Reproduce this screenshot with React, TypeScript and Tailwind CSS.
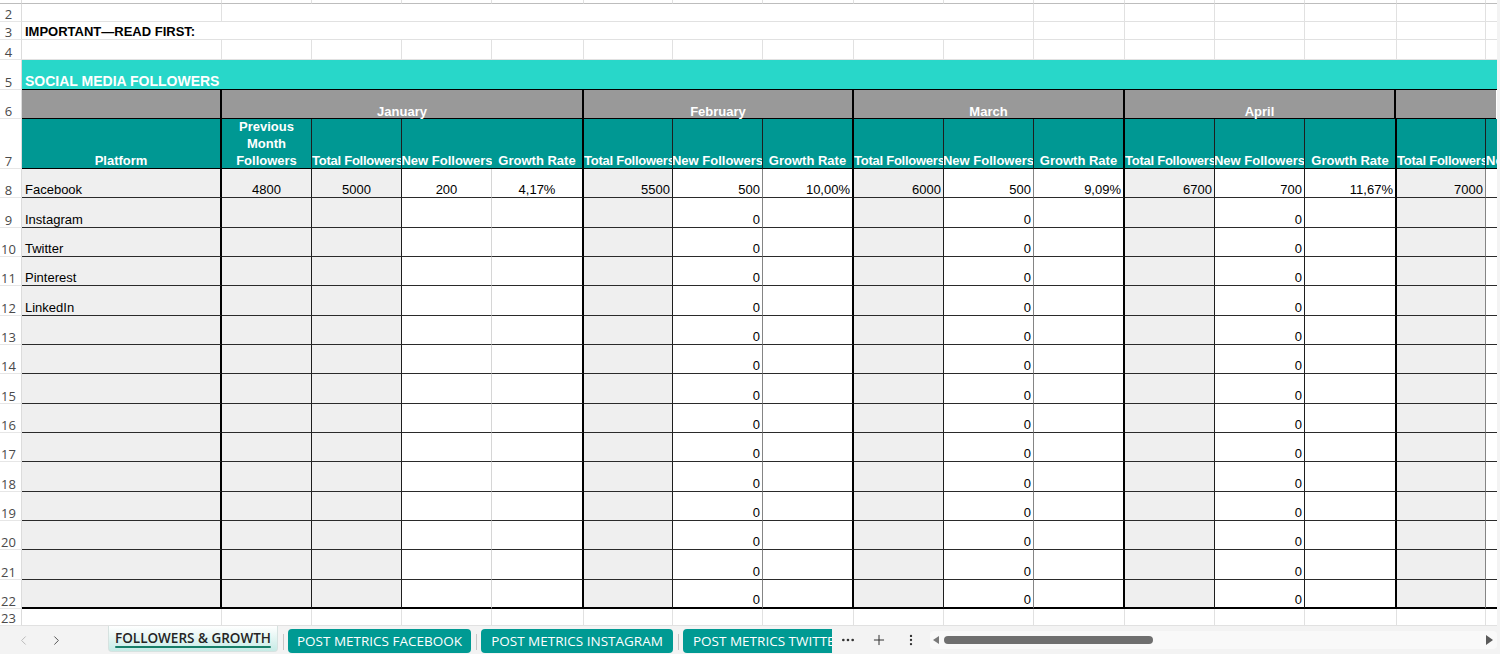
import React from 'react';
import { ChevronLeft, ChevronRight, Plus, MoreVertical, MoreHorizontal } from 'lucide-react';

type Col = { w: string; fill: boolean; br: string; hbr: string; hdr: string; hal: string };

const THICK = 'border-r-2 border-r-black';
const DARK = 'border-r border-r-[#1e1e1e]';
const MID = 'border-r border-r-[#858585]';
const LIGHT = 'border-r border-r-[#d6d6d6]';
const GRID = 'border-r border-r-[#e1e1e1]';
const TL = 'justify-start tracking-[-0.25px]';

const cols: Col[] = [
  { w: 'w-[90px]', fill: true, br: DARK, hbr: DARK, hdr: 'Previous Month Followers', hal: 'justify-center' },
  { w: 'w-[90px]', fill: true, br: DARK, hbr: DARK, hdr: 'Total Followers', hal: TL },
  { w: 'w-[90px]', fill: false, br: LIGHT, hbr: '', hdr: 'New Followers', hal: 'justify-center' },
  { w: 'w-[92px]', fill: false, br: THICK, hbr: THICK, hdr: 'Growth Rate', hal: 'justify-center' },
  { w: 'w-[89px]', fill: true, br: DARK, hbr: DARK, hdr: 'Total Followers', hal: TL },
  { w: 'w-[90px]', fill: false, br: MID, hbr: DARK, hdr: 'New Followers', hal: 'justify-center' },
  { w: 'w-[91px]', fill: false, br: THICK, hbr: THICK, hdr: 'Growth Rate', hal: 'justify-center' },
  { w: 'w-[90px]', fill: true, br: DARK, hbr: DARK, hdr: 'Total Followers', hal: TL },
  { w: 'w-[90px]', fill: false, br: MID, hbr: DARK, hdr: 'New Followers', hal: 'justify-center' },
  { w: 'w-[91px]', fill: false, br: THICK, hbr: THICK, hdr: 'Growth Rate', hal: 'justify-center' },
  { w: 'w-[90px]', fill: true, br: DARK, hbr: DARK, hdr: 'Total Followers', hal: TL },
  { w: 'w-[90px]', fill: false, br: DARK, hbr: DARK, hdr: 'New Followers', hal: 'justify-center' },
  { w: 'w-[92px]', fill: false, br: THICK, hbr: THICK, hdr: 'Growth Rate', hal: 'justify-center' },
  { w: 'w-[89px]', fill: true, br: MID, hbr: DARK, hdr: 'Total Followers', hal: TL },
  { w: 'w-[11px]', fill: false, br: '', hbr: '', hdr: 'New Followers', hal: 'justify-start' },
];

const allW = ['w-[200px]', ...cols.map((c) => c.w)];

function RowHead({ n, cls = '' }: { n?: string; cls?: string }) {
  return (
    <div
      className={`w-[22px] shrink-0 flex items-end justify-center pr-[4px] text-[13px] leading-[13px] text-[#4a4a4a] font-['Open_Sans',sans-serif] border-r border-r-[#dcdcdc] border-b border-b-[#e6e6e6] bg-white ${cls}`}
    >
      {n}
    </div>
  );
}

function GridRow({ n, h }: { n?: string; h: string }) {
  return (
    <div className={`flex shrink-0 ${h}`}>
      <RowHead n={n} />
      {allW.map((w, i) => (
        <div key={i} className={`${w} shrink-0 border-b border-b-[#e1e1e1] ${i < allW.length - 1 ? GRID : ''}`} />
      ))}
    </div>
  );
}

type V = { t: string; a: 'c' | 'r' };

function DataRow({ n, name, vals, last }: { n: string; name: string; vals: (V | null)[]; last?: boolean }) {
  const bb = last ? 'border-b-2 border-b-black' : 'border-b border-b-[#2a2a2a]';
  return (
    <div className="flex flex-1 min-h-0">
      <RowHead n={n} />
      <div className={`w-[200px] shrink-0 bg-[#efefef] ${THICK} ${bb} flex items-end pl-[3px] leading-[15px]`}>{name}</div>
      {cols.map((c, i) => {
        const v = vals[i];
        return (
          <div
            key={i}
            className={`${c.w} shrink-0 ${c.fill ? 'bg-[#efefef]' : 'bg-white'} ${c.br} ${bb} flex items-end leading-[15px] overflow-hidden ${
              v && v.a === 'c' ? 'justify-center' : 'justify-end pr-[2px]'
            }`}
          >
            {v ? v.t : ''}
          </div>
        );
      })}
    </div>
  );
}

const row8: V[] = [
  { t: '4800', a: 'c' },
  { t: '5000', a: 'c' },
  { t: '200', a: 'c' },
  { t: '4,17%', a: 'c' },
  { t: '5500', a: 'r' },
  { t: '500', a: 'r' },
  { t: '10,00%', a: 'r' },
  { t: '6000', a: 'r' },
  { t: '500', a: 'r' },
  { t: '9,09%', a: 'r' },
  { t: '6700', a: 'r' },
  { t: '700', a: 'r' },
  { t: '11,67%', a: 'r' },
  { t: '7000', a: 'r' },
];

const zeroRow: (V | null)[] = [null, null, null, null, null, { t: '0', a: 'r' }, null, null, { t: '0', a: 'r' }, null, null, { t: '0', a: 'r' }, null, null, null];

const names = ['Instagram', 'Twitter', 'Pinterest', 'LinkedIn', '', '', '', '', '', '', '', '', '', ''];

function Sep() {
  return <div className="w-px h-[16px] bg-[#c6c6c6] shrink-0" />;
}

export default function App() {
  return (
    <div className="w-[1500px] h-[654px] overflow-hidden bg-white flex flex-col font-['Liberation_Sans',Arial,sans-serif] text-[13px] text-black">
      <div className="flex flex-1 min-h-0">
        <div className="w-[1497px] shrink-0 flex flex-col">
          {/* row 1 remnant */}
          <div className="flex h-[4px] shrink-0">
            <div className="w-[22px] shrink-0 border-r border-r-[#dcdcdc] border-b border-b-[#bdbdbd]" />
            {allW.map((w, i) => (
              <div key={i} className={`${w} shrink-0 border-b border-b-[#bdbdbd] ${i < allW.length - 1 ? GRID : ''}`} />
            ))}
          </div>
          {/* row 2 */}
          <div className="flex h-[18px] shrink-0">
            <RowHead n="2" />
            <div className={`w-[200px] shrink-0 border-b border-b-[#e1e1e1] ${GRID}`} />
            <div className={`w-[812px] shrink-0 border-b border-b-[#e1e1e1] ${GRID}`} />
            {allW.slice(10).map((w, i, a) => (
              <div key={i} className={`${w} shrink-0 border-b border-b-[#e1e1e1] ${i < a.length - 1 ? GRID : ''}`} />
            ))}
          </div>
          {/* row 3 */}
          <div className="flex h-[18px] shrink-0">
            <RowHead n="3" />
            <div className={`w-[1012px] shrink-0 border-b border-b-[#e1e1e1] ${GRID} flex items-end pl-[3px] font-bold leading-[15px]`}>
              IMPORTANT—READ FIRST:
            </div>
            {allW.slice(10).map((w, i, a) => (
              <div key={i} className={`${w} shrink-0 border-b border-b-[#e1e1e1] ${i < a.length - 1 ? GRID : ''}`} />
            ))}
          </div>
          {/* row 4 */}
          <GridRow n="4" h="h-[20px]" />
          {/* row 5 */}
          <div className="flex h-[30px] shrink-0">
            <RowHead n="5" />
            <div className="flex-1 bg-[#28d7c9] border-b border-b-black flex items-end pl-[3px] text-white font-bold text-[14px] leading-[16px]">
              SOCIAL MEDIA FOLLOWERS
            </div>
          </div>
          {/* row 6 */}
          <div className="flex h-[29px] shrink-0">
            <RowHead n="6" />
            <div className={`w-[200px] shrink-0 bg-[#999999] ${THICK} border-b border-b-black`} />
            {[
              ['w-[362px]', 'January', THICK],
              ['w-[270px]', 'February', THICK],
              ['w-[271px]', 'March', THICK],
              ['w-[271px]', 'April', THICK],
              ['w-[100px]', '', ''],
            ].map(([w, t, b], i) => (
              <div
                key={i}
                className={`${w} shrink-0 bg-[#999999] ${b} border-b border-b-black flex items-end justify-center text-white font-bold leading-[13px]`}
              >
                {t}
              </div>
            ))}
          </div>
          {/* row 7 */}
          <div className="flex h-[50px] shrink-0">
            <RowHead n="7" />
            <div className={`w-[200px] shrink-0 bg-[#009893] ${THICK} border-b border-b-black flex items-end justify-center text-white font-bold leading-[17px]`}>
              <span className="translate-y-[1px]">Platform</span>
            </div>
            {cols.map((c, i) => (
              <div
                key={i}
                className={`${c.w} shrink-0 bg-[#009893] ${c.hbr} border-b border-b-black flex items-end ${c.hal} overflow-hidden text-white font-bold leading-[17px] text-center`}
              >
                <span className={i === 0 ? 'block translate-y-[1px]' : 'whitespace-nowrap shrink-0 translate-y-[1px]'}>{c.hdr}</span>
              </div>
            ))}
          </div>
          {/* data rows 8-22 */}
          <div className="flex flex-col h-[440px] shrink-0">
            <DataRow n="8" name="Facebook" vals={row8} />
            {names.map((nm, i) => (
              <DataRow key={i} n={String(9 + i)} name={nm} vals={zeroRow} last={i === names.length - 1} />
            ))}
          </div>
          {/* row 23 */}
          <GridRow n="23" h="h-[17px]" />
        </div>
        <div className="flex-1 bg-[#f3f3f3]" />
      </div>

      {/* tab bar */}
      <div className="h-[28px] shrink-0 bg-[#f3f3f3] flex items-start font-['Open_Sans',sans-serif] text-[13.5px]">
        <div className="w-[108px] shrink-0 h-full flex items-center">
          <ChevronLeft className="ml-[16px] text-[#b5b5b5]" size={15} strokeWidth={1.5} />
          <ChevronRight className="ml-[18px] text-[#4a4a4a]" size={15} strokeWidth={1.5} />
        </div>
        <div className="relative w-[170px] h-[26px] shrink-0 rounded-b-[4px] bg-gradient-to-b from-white to-[#c6ebe6] border-x border-b border-[#d6e2e0] flex items-center justify-center font-semibold text-[#242424]">
          <span className="leading-[18px] -mt-[2px]">FOLLOWERS &amp; GROWTH</span>
          <div className="absolute left-[6px] right-[6px] bottom-[3px] h-[2px] rounded-full bg-[#167e68]" />
        </div>
        <div className="ml-[5px] mt-[8px]"><Sep /></div>
        <div className="ml-[4px] mt-[3px] w-[183px] h-[24px] shrink-0 rounded-[4px] bg-[#009a93] text-white flex items-center justify-center whitespace-nowrap">
          POST METRICS FACEBOOK
        </div>
        <div className="ml-[5px] mt-[8px]"><Sep /></div>
        <div className="ml-[4px] mt-[3px] w-[192px] h-[24px] shrink-0 rounded-[4px] bg-[#009a93] text-white flex items-center justify-center whitespace-nowrap">
          POST METRICS INSTAGRAM
        </div>
        <div className="ml-[5px] mt-[8px]"><Sep /></div>
        <div className="ml-[4px] mt-[3px] w-[149px] h-[24px] shrink-0 rounded-l-[4px] bg-[#009a93] text-white flex items-center pl-[10px] whitespace-nowrap overflow-hidden">
          POST METRICS TWITTER
        </div>
        <div className="h-full flex items-center">
          <MoreHorizontal className="ml-[8px] text-[#333]" size={16} strokeWidth={2} />
          <Plus className="ml-[15px] text-[#333]" size={16} strokeWidth={1.5} />
          <MoreVertical className="ml-[17px] text-[#333]" size={14} strokeWidth={2} />
        </div>
        <div className="ml-[12px] mt-[5px] flex-1 mr-[3px] h-[18px] rounded-[4px] bg-[#f9f9f9] flex items-center">
          <div className="ml-[3px] w-0 h-0 border-y-[4px] border-y-transparent border-r-[6px] border-r-[#7a7a7a]" />
          <div className="ml-[5px] w-[209px] h-[8px] rounded-full bg-[#6f6f6f]" />
          <div className="flex-1" />
          <div className="mr-[4px] w-0 h-0 border-y-[5px] border-y-transparent border-l-[7px] border-l-[#5a5a5a]" />
        </div>
      </div>
    </div>
  );
}
